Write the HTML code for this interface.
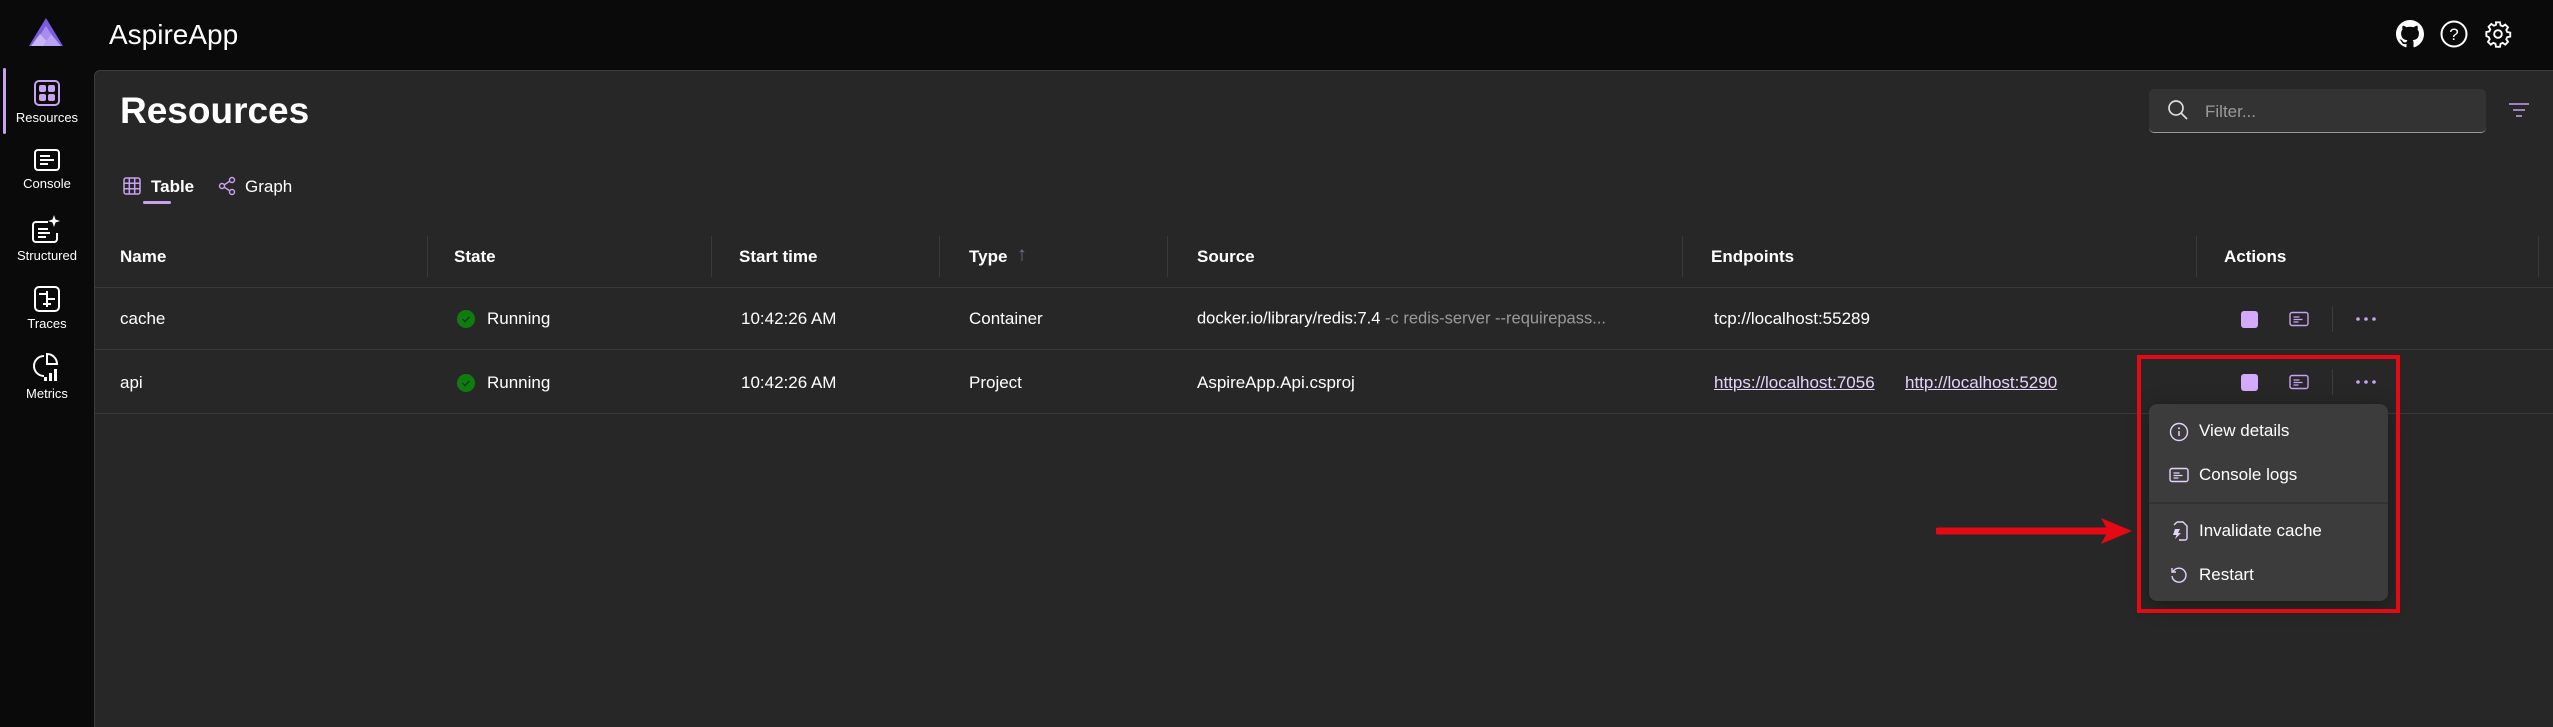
<!DOCTYPE html>
<html><head><meta charset="utf-8"><style>
*{margin:0;padding:0;box-sizing:border-box}
body{width:2553px;height:727px;background:#0a0a0a;font-family:"Liberation Sans",sans-serif;color:#fff;position:relative;overflow:hidden}
.a{position:absolute}
.main{left:94px;top:70px;width:2459px;height:657px;background:#272727;border-top:1px solid #3d3d3d;border-left:1px solid #3d3d3d;border-top-left-radius:6px}
.nav{left:0;width:94px;text-align:center;font-size:13px;color:#fff}
.nav svg{display:block;margin:0 auto 4px}
.t{font-size:17px;transform:translateY(-50%);white-space:nowrap}
.h{font-weight:bold}
.hl{height:1px;background:#3a3a3a;left:94px;width:2459px}
.sep{width:1px;background:#3a3a3a;top:236px;height:41px}
.mi{left:2199px;font-size:17px;transform:translateY(-50%)}
.ic{transform:translate(-50%,-50%)}
</style></head><body>
<!-- logo -->
<svg class="a" style="left:29px;top:18px" width="34" height="30" viewBox="0 0 34 30"><polygon points="17,0 34,28 0,28" fill="#7b5be0"/><polygon points="17,8 30,28 4,28" fill="#a88cf0"/><polygon points="11,16 22,28 2,28" fill="#c9b5f7"/><polygon points="22,16 32,28 14,28" fill="#b9a3f4"/></svg>
<div class="a t" style="left:109px;top:35px;font-size:28px">AspireApp</div>
<!-- top icons -->
<svg class="a ic" style="left:2410px;top:34px" width="28" height="28" viewBox="0 0 16 16"><path fill="#fff" d="M8 0C3.58 0 0 3.58 0 8c0 3.54 2.29 6.53 5.47 7.59.4.07.55-.17.55-.38 0-.19-.01-.82-.01-1.49-2.01.37-2.53-.49-2.69-.94-.09-.23-.48-.94-.82-1.13-.28-.15-.68-.52-.01-.53.63-.01 1.08.58 1.23.82.72 1.21 1.87.87 2.33.66.07-.52.28-.87.51-1.07-1.78-.2-3.64-.89-3.64-3.95 0-.87.31-1.59.82-2.15-.08-.2-.36-1.02.08-2.12 0 0 .67-.21 2.2.82.64-.18 1.32-.27 2-.27s1.36.09 2 .27c1.53-1.04 2.2-.82 2.2-.82.44 1.1.16 1.92.08 2.12.51.56.82 1.27.82 2.15 0 3.07-1.87 3.75-3.65 3.95.29.25.54.73.54 1.48 0 1.07-.01 1.93-.01 2.2 0 .21.15.46.55.38A8.01 8.01 0 0016 8c0-4.42-3.58-8-8-8z"/></svg>
<svg class="a ic" style="left:2454px;top:34px" width="28" height="28" viewBox="0 0 28 28"><circle cx="14" cy="14" r="12.5" fill="none" stroke="#fff" stroke-width="2"/><text x="14" y="20" text-anchor="middle" font-size="17" fill="#fff" font-family="Liberation Sans">?</text></svg>
<svg class="a ic" style="left:2498px;top:34px" width="28" height="28" viewBox="0 0 24 24"><path fill="none" stroke="#fff" stroke-width="1.6" d="M10.3 2h3.4l.5 2.6 1.8.8 2.2-1.5 2.4 2.4-1.5 2.2.8 1.8 2.6.5v3.4l-2.6.5-.8 1.8 1.5 2.2-2.4 2.4-2.2-1.5-1.8.8-.5 2.6h-3.4l-.5-2.6-1.8-.8-2.2 1.5-2.4-2.4 1.5-2.2-.8-1.8L2 13.7v-3.4l2.6-.5.8-1.8-1.5-2.2 2.4-2.4 2.2 1.5 1.8-.8z"/><circle cx="12" cy="12" r="3.3" fill="none" stroke="#fff" stroke-width="1.6"/></svg>
<!-- sidebar -->
<div class="a" style="left:3px;top:68px;width:3px;height:66px;background:#c8a2f0;border-radius:2px"></div>
<div class="a nav" style="top:80px"><svg width="26" height="26" viewBox="0 0 26 26"><rect x="1" y="1" width="24" height="24" rx="4" fill="none" stroke="#c8a2f0" stroke-width="2"/><rect x="5" y="5" width="7" height="7" rx="2" fill="#c8a2f0"/><rect x="14" y="5" width="7" height="7" rx="2" fill="#c8a2f0"/><rect x="5" y="14" width="7" height="7" rx="2" fill="#c8a2f0"/><rect x="14" y="14" width="7" height="7" rx="2" fill="#c8a2f0"/></svg>Resources</div>
<div class="a nav" style="top:148px"><svg width="26" height="24" viewBox="0 0 26 24"><rect x="1" y="2" width="24" height="20" rx="3" fill="none" stroke="#fff" stroke-width="2"/><path d="M6 8h10M6 12h14M6 16h8" stroke="#fff" stroke-width="2"/></svg>Console</div>
<div class="a nav" style="top:214px"><svg width="30" height="30" viewBox="0 0 30 30"><path d="M16 8H4a3 3 0 00-3 3v14a3 3 0 003 3h18a3 3 0 003-3v-6" fill="none" stroke="#fff" stroke-width="2"/><path d="M6 15h10M6 19h12M6 23h8" stroke="#fff" stroke-width="2"/><path d="M22 1l1.5 4.5L28 7l-4.5 1.5L22 13l-1.5-4.5L16 7l4.5-1.5z" fill="#fff"/></svg>Structured</div>
<div class="a nav" style="top:286px"><svg width="26" height="26" viewBox="0 0 26 26"><rect x="1" y="1" width="24" height="24" rx="4" fill="none" stroke="#fff" stroke-width="2"/><path d="M5 8h8M13 5v16M13 13h8M9 18h8" stroke="#fff" stroke-width="2"/></svg>Traces</div>
<div class="a nav" style="top:352px"><svg width="30" height="30" viewBox="0 0 30 30"><path d="M12 4a10 10 0 100 20" fill="none" stroke="#fff" stroke-width="2"/><path d="M15 2v10h10A10 10 0 0015 2z" fill="none" stroke="#fff" stroke-width="2"/><rect x="17" y="21" width="3" height="8" fill="#fff"/><rect x="22" y="17" width="3" height="12" fill="#fff"/><rect x="12" y="25" width="3" height="4" fill="#fff"/></svg>Metrics</div>
<!-- main -->
<div class="a main"></div>
<div class="a t" style="left:120px;top:111px;font-size:37px;font-weight:bold">Resources</div>
<div class="a" style="left:2149px;top:89px;width:337px;height:44px;background:#333;border-radius:5px;border-bottom:1px solid #9a9a9a"></div>
<svg class="a ic" style="left:2178px;top:110px" width="22" height="22" viewBox="0 0 22 22"><circle cx="9" cy="9" r="7" fill="none" stroke="#ddd" stroke-width="1.7"/><path d="M14 14l6 6" stroke="#ddd" stroke-width="1.7"/></svg>
<div class="a t" style="left:2205px;top:112px;color:#9a9a9a">Filter...</div>
<svg class="a ic" style="left:2519px;top:110px" width="22" height="16" viewBox="0 0 22 16"><path d="M1 2h20M5 8h12M8 14h6" stroke="#c8a2f0" stroke-width="1.6"/></svg>
<!-- tabs -->
<svg class="a ic" style="left:132px;top:186px" width="18" height="18" viewBox="0 0 18 18"><rect x="1" y="1" width="16" height="16" rx="2" fill="none" stroke="#c8a2f0" stroke-width="1.5"/><path d="M6.3 1v16M11.7 1v16M1 6.3h16M1 11.7h16" stroke="#c8a2f0" stroke-width="1.5"/></svg>
<div class="a t h" style="left:151px;top:187px">Table</div>
<div class="a" style="left:143px;top:201px;width:28px;height:3px;background:#c8a2f0;border-radius:2px"></div>
<svg class="a ic" style="left:227px;top:186px" width="18" height="20" viewBox="0 0 18 20"><circle cx="14" cy="4" r="2.5" fill="none" stroke="#c8a2f0" stroke-width="1.4"/><circle cx="4" cy="10" r="2.5" fill="none" stroke="#c8a2f0" stroke-width="1.4"/><circle cx="14" cy="16" r="2.5" fill="none" stroke="#c8a2f0" stroke-width="1.4"/><path d="M6 9l6-4M6 11l6 4" stroke="#c8a2f0" stroke-width="1.4"/></svg>
<div class="a t" style="left:245px;top:187px">Graph</div>
<!-- table header -->
<div class="a t h" style="left:120px;top:257px">Name</div>
<div class="a t h" style="left:454px;top:257px">State</div>
<div class="a t h" style="left:739px;top:257px">Start time</div>
<div class="a t h" style="left:969px;top:257px">Type</div>
<div class="a t" style="left:1017px;top:255px;color:#7a6a90;font-size:20px">↑</div>
<div class="a t h" style="left:1197px;top:257px">Source</div>
<div class="a t h" style="left:1711px;top:257px">Endpoints</div>
<div class="a t h" style="left:2224px;top:257px">Actions</div>
<div class="a sep" style="left:427px"></div><div class="a sep" style="left:711px"></div><div class="a sep" style="left:939px"></div><div class="a sep" style="left:1167px"></div><div class="a sep" style="left:1682px"></div><div class="a sep" style="left:2196px"></div><div class="a sep" style="left:2538px"></div>
<div class="a hl" style="top:287px"></div><div class="a hl" style="top:349px"></div><div class="a hl" style="top:413px"></div>
<!-- rows -->
<div class="a t" style="left:120px;top:319px">cache</div>
<div class="a t" style="left:120px;top:383px">api</div>
<svg class="a ic" style="left:466px;top:319px" width="18" height="18" viewBox="0 0 18 18"><circle cx="9" cy="9" r="9" fill="#107c10"/><path d="M5.5 9.2l2.4 2.4 4.6-4.8" fill="none" stroke="#0b3d0b" stroke-width="1.3"/></svg>
<svg class="a ic" style="left:466px;top:383px" width="18" height="18" viewBox="0 0 18 18"><circle cx="9" cy="9" r="9" fill="#107c10"/><path d="M5.5 9.2l2.4 2.4 4.6-4.8" fill="none" stroke="#0b3d0b" stroke-width="1.3"/></svg>
<div class="a t" style="left:487px;top:319px">Running</div>
<div class="a t" style="left:487px;top:383px">Running</div>
<div class="a t" style="left:741px;top:319px">10:42:26 AM</div>
<div class="a t" style="left:741px;top:383px">10:42:26 AM</div>
<div class="a t" style="left:969px;top:319px">Container</div>
<div class="a t" style="left:969px;top:383px">Project</div>
<div class="a t" style="left:1197px;top:319px;font-size:16.5px">docker.io/library/redis:7.4 <span style="color:#9a9a9a">-c redis-server --requirepass...</span></div>
<div class="a t" style="left:1197px;top:383px">AspireApp.Api.csproj</div>
<div class="a t" style="left:1714px;top:319px">tcp://localhost:55289</div>
<div class="a t" style="left:1714px;top:383px;color:#e6d3fb;text-decoration:underline">https://localhost:7056</div>
<div class="a t" style="left:1905px;top:383px;color:#e6d3fb;text-decoration:underline">http://localhost:5290</div>
<!-- actions -->
<div class="a" style="left:2241px;top:311px;width:17px;height:17px;background:#d4aafc;border-radius:3px"></div>
<div class="a" style="left:2241px;top:374px;width:17px;height:17px;background:#d4aafc;border-radius:3px"></div>
<svg class="a ic" style="left:2299px;top:319px" width="20" height="16" viewBox="0 0 20 16"><rect x="1" y="1.5" width="18" height="13" rx="2" fill="none" stroke="#c8a2f0" stroke-width="1.4"/><path d="M4.5 6h6M4.5 8.5h9M4.5 11h5" stroke="#c8a2f0" stroke-width="1.3"/></svg>
<svg class="a ic" style="left:2299px;top:382px" width="20" height="16" viewBox="0 0 20 16"><rect x="1" y="1.5" width="18" height="13" rx="2" fill="none" stroke="#c8a2f0" stroke-width="1.4"/><path d="M4.5 6h6M4.5 8.5h9M4.5 11h5" stroke="#c8a2f0" stroke-width="1.3"/></svg>
<div class="a" style="left:2332px;top:306px;width:1px;height:26px;background:#3c3c3c"></div>
<div class="a" style="left:2332px;top:369px;width:1px;height:26px;background:#3c3c3c"></div>
<svg class="a ic" style="left:2366px;top:319px" width="20" height="4" viewBox="0 0 20 4"><circle cx="2" cy="2" r="1.8" fill="#c8a2f0"/><circle cx="10" cy="2" r="1.8" fill="#c8a2f0"/><circle cx="18" cy="2" r="1.8" fill="#c8a2f0"/></svg>
<svg class="a ic" style="left:2366px;top:382px" width="20" height="4" viewBox="0 0 20 4"><circle cx="2" cy="2" r="1.8" fill="#c8a2f0"/><circle cx="10" cy="2" r="1.8" fill="#c8a2f0"/><circle cx="18" cy="2" r="1.8" fill="#c8a2f0"/></svg>
<!-- menu -->
<div class="a" style="left:2149px;top:404px;width:239px;height:197px;background:#3c3c3c;border-radius:8px;box-shadow:0 4px 20px rgba(0,0,0,.35)"></div>
<div class="a" style="left:2149px;top:502px;width:239px;height:2px;background:#333"></div>
<svg class="a ic" style="left:2179px;top:432px" width="20" height="20" viewBox="0 0 20 20"><circle cx="10" cy="10" r="8.5" fill="none" stroke="#e6d3fb" stroke-width="1.4"/><path d="M10 9v5" stroke="#e6d3fb" stroke-width="1.5"/><circle cx="10" cy="6.3" r="1" fill="#e6d3fb"/></svg>
<div class="a mi" style="top:431px">View details</div>
<svg class="a ic" style="left:2179px;top:475px" width="20" height="16" viewBox="0 0 20 16"><rect x="1" y="1.5" width="18" height="13" rx="2" fill="none" stroke="#e6d3fb" stroke-width="1.4"/><path d="M4.5 6h6M4.5 8.5h9M4.5 11h5" stroke="#e6d3fb" stroke-width="1.3"/></svg>
<div class="a mi" style="top:475px">Console logs</div>
<svg class="a ic" style="left:2179px;top:531px" width="20" height="20" viewBox="0 0 20 20"><path d="M8 1h6l4 4v12a2 2 0 01-2 2h-6" fill="none" stroke="#e6d3fb" stroke-width="1.4"/><path d="M7 4v0M8 1L5 4" stroke="#e6d3fb" stroke-width="1.4"/><path d="M6 8h5l-2 4h3l-6 6 1.5-4H4z" fill="#e6d3fb"/></svg>
<div class="a mi" style="top:531px">Invalidate cache</div>
<svg class="a ic" style="left:2179px;top:575px" width="20" height="20" viewBox="0 0 20 20"><path d="M4 6.5A7 7 0 1 1 3 11" fill="none" stroke="#e6d3fb" stroke-width="1.4"/><path d="M3 3v4h4" fill="none" stroke="#e6d3fb" stroke-width="1.4"/></svg>
<div class="a mi" style="top:575px">Restart</div>
<!-- red annotation -->
<div class="a" style="left:2137px;top:355px;width:263px;height:258px;border:4px solid #e50914"></div>
<svg class="a" style="left:1936px;top:514px" width="200" height="34" viewBox="0 0 200 34"><path d="M2 17H170" stroke="#e50914" stroke-width="7" stroke-linecap="round"/><path d="M165 4L196 17 165 30 172 17z" fill="#e50914"/></svg>
</body></html>
